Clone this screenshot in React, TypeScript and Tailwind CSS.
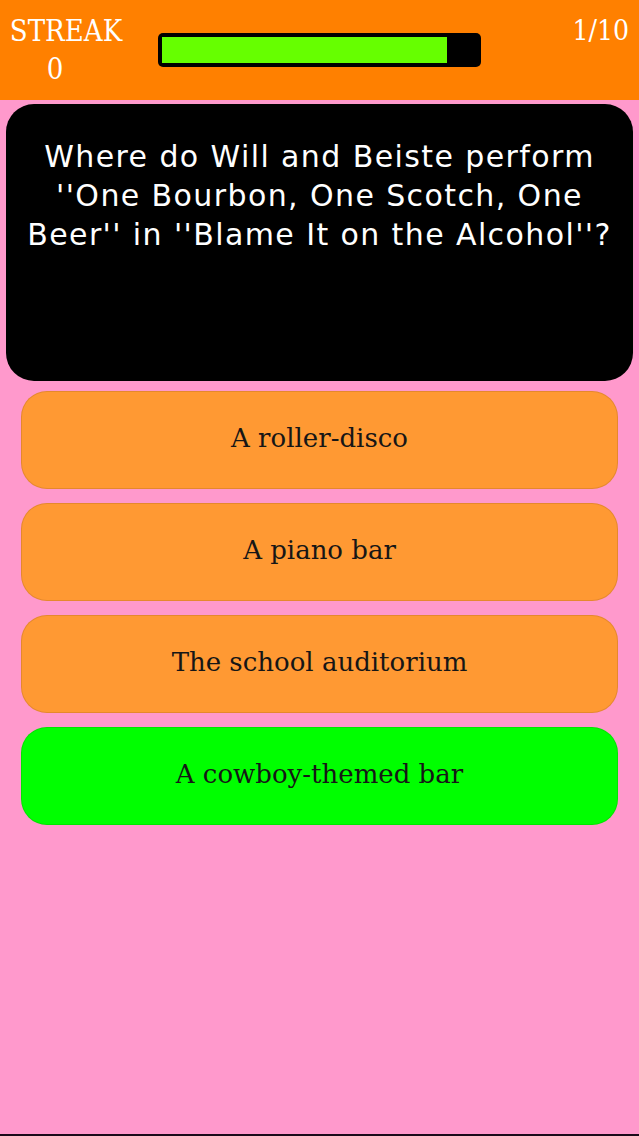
const answers = [
  { text: "A roller-disco", correct: false },
  { text: "A piano bar", correct: false },
  { text: "The school auditorium", correct: false },
  { text: "A cowboy-themed bar", correct: true },
];

const headerFont = "font-['DejaVu_Serif_Condensed','Liberation_Serif',serif]";
const answerFont = "font-['DejaVu_Serif','Liberation_Serif',serif]";

export default function App() {
  return (
    <div className="flex h-[1136px] w-[639px] flex-col overflow-hidden border-b-2 border-[#1a0a1a] bg-[#ff99cc]">
      <header className="flex h-[100px] shrink-0 items-start bg-[#ff8000] px-[10px] pt-[12px] text-white">
        <div className={`flex w-[112px] flex-col items-center text-[29px] leading-[38px] ${headerFont}`}>
          <span>STREAK</span>
          <span className="mr-[22px]">0</span>
        </div>
        <div className="ml-[36px] mt-[21px] h-[34px] w-[323px] rounded-[5px] bg-black p-[4px] pr-[34px]">
          <div className="h-full w-full bg-[#66ff00]" />
        </div>
        <div className={`ml-auto text-[28px] leading-[38px] ${headerFont}`}>1/10</div>
      </header>

      <section className="mx-[6px] mt-[4px] h-[277px] shrink-0 rounded-[28px] bg-black px-[12px] pt-[33px] text-center font-['DejaVu_Sans',sans-serif] text-[30px] leading-[39px] tracking-[1.4px] text-white">
        Where do Will and Beiste perform ''One Bourbon, One Scotch, One Beer'' in ''Blame It on the Alcohol''?
      </section>

      <div className="mx-[21px] mt-[10px] flex flex-col gap-[14px]">
        {answers.map((a) => (
          <button
            key={a.text}
            type="button"
            className={`flex h-[98px] items-center justify-center rounded-[26px] border border-black/10 pb-[3px] text-[26px] text-[#161616] ${answerFont} ${
              a.correct ? "bg-[#00ff00]" : "bg-[#ff9933]"
            }`}
          >
            {a.text}
          </button>
        ))}
      </div>
    </div>
  );
}
